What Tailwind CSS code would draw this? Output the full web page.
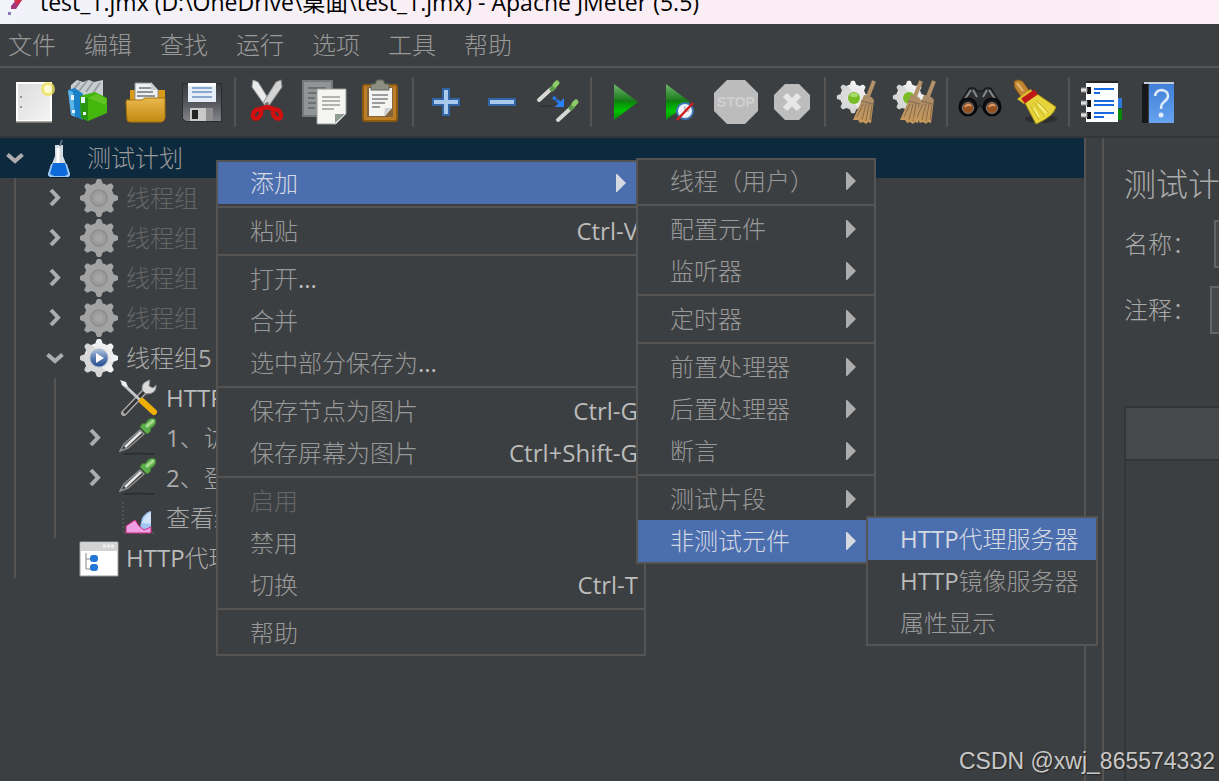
<!DOCTYPE html>
<html lang="zh-CN">
<head>
  <meta charset="UTF-8" />
  <meta name="viewport" content="width=device-width, initial-scale=1.0"/>
  <title>Apache JMeter (5.5)</title>
  <script src="https://cdn.jsdelivr.net/npm/@tailwindcss/browser@4"></script>
</head>
<body class="h-screen overflow-hidden flex flex-col bg-[#3c3f41] text-[#999999] text-2xl font-['Open_Sans','Noto_Sans_CJK_SC',sans-serif] font-light whitespace-nowrap">

  <!-- Shared icon shapes -->
  <svg width="0" height="0" class="absolute">
    <defs>
      <linearGradient id="gPaper" x1="0" y1="0" x2="1" y2="1"><stop offset="0" stop-color="#dcdcdc"/><stop offset="1" stop-color="#f4f4f4"/></linearGradient>
      <linearGradient id="gFolder" x1="0" y1="0" x2="0" y2="1"><stop offset="0" stop-color="#e9b84e"/><stop offset="1" stop-color="#c28a10"/></linearGradient>
      <linearGradient id="gDisk" x1="0" y1="0" x2="0" y2="1"><stop offset="0" stop-color="#3a3b40"/><stop offset=".5" stop-color="#55565c"/><stop offset="1" stop-color="#85868c"/></linearGradient>
      <linearGradient id="gPlay" x1="0" y1="0" x2="0" y2="1"><stop offset="0" stop-color="#6fb56f"/><stop offset=".48" stop-color="#157a15"/><stop offset=".52" stop-color="#089008"/><stop offset=".75" stop-color="#00c400"/><stop offset="1" stop-color="#0a8a0a"/></linearGradient>
      <linearGradient id="gBlue" x1="0" y1="0" x2="0" y2="1"><stop offset="0" stop-color="#3f7fd6"/><stop offset="1" stop-color="#66a3f0"/></linearGradient>
      <linearGradient id="gGear" x1="0" y1="0" x2="0" y2="1"><stop offset="0" stop-color="#f4f4f4"/><stop offset="1" stop-color="#d2d2d2"/></linearGradient>
      <linearGradient id="gStraw" x1="0" y1="0" x2="0" y2="1"><stop offset="0" stop-color="#a98c6a"/><stop offset="1" stop-color="#c99a5c"/></linearGradient>
      <linearGradient id="gBall" x1="0" y1="0" x2="0" y2="1"><stop offset="0" stop-color="#b4c6dc"/><stop offset=".45" stop-color="#5f83b6"/><stop offset="1" stop-color="#24498c"/></linearGradient>
    </defs>
    <symbol id="gear" viewBox="0 0 40 40">
      <circle cx="20" cy="20" r="15"/>
      <path id="teeth" d="M18.500 1h3l1 1 2 6v24l-2 6-1 1h-3l-1-1-2-6V8l2-6z"/>
      <use href="#teeth" transform="rotate(45 20 20)"/>
      <use href="#teeth" transform="rotate(90 20 20)"/>
      <use href="#teeth" transform="rotate(135 20 20)"/>
    </symbol>
    <symbol id="group-off" viewBox="0 0 40 40">
      <use href="#gear" fill="#a3a3a3"/>
      <circle cx="20" cy="20" r="8" fill="#9c9c9c" stroke="#8f8f8f" stroke-width="2"/>
      <circle cx="20" cy="20" r="4" fill="#a6a6a6"/>
    </symbol>
    <symbol id="dropper" viewBox="0 0 40 40">
      <path d="M5 36q15-1 30 0" stroke="#2a2c2d" stroke-width="1.500" fill="none"/>
      <path d="M1 33l4-7L21 12l4 4L9 30z" fill="#3a3a3a" stroke="#8d8d8d" stroke-width="1.500"/>
      <path d="M6 29L22 14" stroke="#e8e8e8" stroke-width="2.500"/>
      <path d="M21 9l7 7 3-2 1-4 3-2q3-4 1-7-4-2-7 1l-2 3-4 1z" fill="#5fae4e" stroke="#3d7e35"/>
      <path d="M28 8l6-5" stroke="#a5da8c" stroke-width="3" stroke-linecap="round"/>
    </symbol>
    <symbol id="whisk" viewBox="0 0 24 48">
      <path d="M21 3l-7 18" stroke="#b3916a" stroke-width="4"/>
      <path d="M11 17q7 0 10 5l-3 23-3-1-2 2-3-2-3 1-2-3-5 0z" fill="url(#gStraw)"/>
      <path d="M10 26L4 39M13 26l-4 16M16 26l-3 17M19 27l-2 15" stroke="#8a6a45" stroke-width="1"/>
      <path d="M8 23l12 3" stroke="#8d7355" stroke-width="1.500"/>
    </symbol>
    <symbol id="arrow" viewBox="0 0 10 18"><path d="M0 0h1l9 9-9 9H0z" fill="currentColor"/></symbol>
    <symbol id="open" viewBox="0 0 20 20"><path d="M2.500 6.500L10 13l7.500-6.500" fill="none" stroke="#adadad" stroke-width="4"/></symbol>
    <symbol id="closed" viewBox="0 0 20 20"><path d="M6 2l7 7.500L6 17" fill="none" stroke="#adadad" stroke-width="4"/></symbol>
  </svg>

  <!-- Title bar -->
  <header class="h-6 shrink-0 flex items-end gap-4 pl-2 overflow-hidden bg-gradient-to-r from-[#f1f2fa] via-[#faeef4] via-40% to-[#fbeef4] text-black">
    <svg width="16" height="24" viewBox="0 0 16 24"><path d="M3 6L8 0h6L8 9H3z" fill="#a5367c"/><path d="M6 0h8L9 5z" fill="#d22c4a"/><rect y="12" width="3" height="3" fill="#8878bc"/></svg>
    <p class="text-[23px] leading-[44px] font-normal">test_1.jmx (D:\OneDrive\桌面\test_1.jmx) - Apache JMeter (5.5)</p>
  </header>

  <!-- Menu bar -->
  <nav class="h-11 shrink-0 flex items-center gap-7 pl-2 border-b-2 border-[#565453]">
    <button>文件</button>
    <button>编辑</button>
    <button>查找</button>
    <button>运行</button>
    <button>选项</button>
    <button>工具</button>
    <button>帮助</button>
  </nav>

  <!-- Toolbar -->
  <div class="h-[70px] shrink-0 flex items-center pl-[6px] border-b-2 border-[#333638]">
    <button class="w-14 flex justify-center" aria-label="新建">
      <svg width="48" height="48" viewBox="0 0 48 48"><rect x="7" y="5" width="34" height="38" fill="url(#gPaper)" stroke="#fff" stroke-width="2"/><path d="M6 44h36" stroke="#8c8c80" stroke-width="1.500"/><path d="M10 19h2M10 29h2" stroke="#999" stroke-width="2"/><circle cx="38" cy="11" r="7" fill="#f0e45a" opacity=".8"/><circle cx="38" cy="11" r="4" fill="#fffbd0"/></svg>
    </button>
    <button class="w-14 flex justify-center" aria-label="模板">
      <svg width="48" height="48" viewBox="0 0 48 48"><path d="M5 7l6-5 6 2 6-2 5 2 9-2v18H4z" fill="#c7cdd0"/><path d="M7 12l7-8M13 13l8-10M20 14l7-10M27 15l7-10" stroke="#9aa1a5" stroke-width="2"/><path d="M2 12l7-2 8 6v26L5 37z" fill="#1a80c8"/><path d="M2 12l5 2 2 25-4-2z" fill="#5cb3e8"/><path d="M14 18l15-4 12 6v15L22 43l-7-3z" fill="#43b70c"/><path d="M14 18l8 2v23l-7-3z" fill="#2a9610"/><path d="M22 20l9-4 9 5v6z" fill="#62c424"/><path d="M15 19h4v6h-4M5 17h3v5H5M6 32h3v3H6M17 34h3v3h-3" fill="#e3f5ff"/></svg>
    </button>
    <button class="w-14 flex justify-center" aria-label="打开">
      <svg width="48" height="48" viewBox="0 0 48 48"><path d="M8 12h35v28H8z" fill="#d99a1c"/><path d="M13 5h16l7 7v14H13z" fill="#f0f0f0" stroke="#8d9191"/><path d="M17 10h13M15 14h16M15 18h18" stroke="#8d9598" stroke-width="2"/><path d="M29 4l7 8h-7z" fill="#c7cccc"/><path d="M4 24q0-3 3-2h13l3-2h20v20q-1 4-4 4H8q-3 0-3-3z" fill="url(#gFolder)" stroke="#a87508"/></svg>
    </button>
    <button class="w-14 flex justify-center" aria-label="保存">
      <svg width="48" height="48" viewBox="0 0 48 48"><path d="M4.500 5.500h39v38H8l-3.500-3z" fill="url(#gDisk)" stroke="#2b2c30"/><path d="M10 5h28v19H10z" fill="#e5eef7"/><path d="M10 5h28v3H10z" fill="#fff"/><path d="M14 10h20M14 14h20M14 19h20" stroke="#8aa9cc" stroke-width="2"/><path d="M12 30h23v13H12z" fill="#c9c9c9"/><path d="M28 30h7v13h-7z" fill="#8f8f8f"/><path d="M14 32h6v9h-6z" fill="#222"/></svg>
    </button>
    <span class="w-[2px] h-[50px] mx-1 bg-[#565453]"></span>
    <button class="w-14 flex justify-center" aria-label="剪切">
      <svg width="48" height="48" viewBox="0 0 48 48"><path d="M9 2l5 2 13 21-5 4L8 9z" fill="#eaeaea" stroke="#999"/><path d="M37 2l-5 2-13 21 5 4L38 9z" fill="#d3d3d3" stroke="#909090"/><circle cx="23" cy="26" r="2" fill="#777"/><g fill="none" stroke="#d01010" stroke-width="4.500"><ellipse cx="13" cy="36" rx="3.500" ry="5" transform="rotate(35 13 36)"/><ellipse cx="33" cy="36" rx="3.500" ry="5" transform="rotate(-35 33 36)"/><path d="M16 31l7-2 7 2"/></g></svg>
    </button>
    <button class="w-14 flex justify-center" aria-label="复制">
      <svg width="48" height="48" viewBox="0 0 48 48"><path d="M3 3h29v35H3z" fill="#929595" stroke="#757878" stroke-width="2"/><path d="M8 10h18M8 15h9M8 20h7M8 25h8M8 30h7" stroke="#6c7070" stroke-width="2"/><path d="M17 11h29v25l-10 10H17z" fill="#f5f5f4" stroke="#9a9c98"/><path d="M22 19h18M22 23h18M22 27h18M22 31h12" stroke="#9c9f9b" stroke-width="1.500"/><path d="M35 45v-9h10z" fill="#8e9d90"/></svg>
    </button>
    <button class="w-14 flex justify-center" aria-label="粘贴">
      <svg width="48" height="48" viewBox="0 0 48 48"><rect x="7" y="7" width="34" height="36" rx="2" fill="#bd7f26" stroke="#8c5a10" stroke-width="2"/><path d="M11 9h26v30H11z" fill="#81643c"/><path d="M13 10h23v20l-7 8H13z" fill="#f4f4f2"/><path d="M16 17h16M16 21h16M16 25h13M16 29h8" stroke="#9d9d9d" stroke-width="2"/><path d="M28 38l1-8h7z" fill="#cfcfcf"/><path d="M15 12V6h4l2-4h6l2 4h4v6z" fill="#8d9080" stroke="#606358"/></svg>
    </button>
    <span class="w-[2px] h-[50px] mx-1 bg-[#565453]"></span>
    <button class="w-14 flex justify-center" aria-label="展开">
      <svg width="48" height="48" viewBox="0 0 48 48"><path d="M21 11h6v10h10v6H27v10h-6V27H11v-6h10z" fill="#a9c9ec" stroke="#3165a8" stroke-width="2"/></svg>
    </button>
    <button class="w-14 flex justify-center" aria-label="折叠">
      <svg width="48" height="48" viewBox="0 0 48 48"><path d="M11 21h26v6H11z" fill="#a9c9ec" stroke="#3165a8" stroke-width="2"/></svg>
    </button>
    <button class="w-14 flex justify-center" aria-label="切换">
      <svg width="48" height="48" viewBox="0 0 48 48"><g stroke-linecap="round"><path d="M5 22L17 11M24 42L36 31" stroke="#d9d9d4" stroke-width="4"/><path d="M18 11l2-2M37 30l2-2" stroke="#5d9a50" stroke-width="5"/><path d="M21 7l2-2M40 26l2-2" stroke="#8bcb68" stroke-width="5"/></g><path d="M5 28h14" stroke="#292c2e"/><path d="M19 19l7 6" stroke="#2677e8" stroke-width="3" stroke-dasharray="4 1"/><path d="M30 20v9h-9z" fill="#2b82fb"/></svg>
    </button>
    <span class="w-[2px] h-[50px] mx-1 bg-[#565453]"></span>
    <button class="w-14 flex justify-center" aria-label="启动">
      <svg width="48" height="48" viewBox="0 0 48 48"><path d="M14 6l24 18-24 18z" fill="url(#gPlay)"/></svg>
    </button>
    <button class="w-14 flex justify-center" aria-label="不停顿开始">
      <svg width="48" height="48" viewBox="0 0 48 48"><path d="M10 6l24 18-24 18z" fill="url(#gPlay)"/><circle cx="29" cy="33" r="8" fill="#eef4fa" stroke="#3e78ba" stroke-width="2"/><path d="M29 33v-5M29 33h4" stroke="#999"/><path d="M21 42l16-17" stroke="#d31d1d" stroke-width="2.500"/></svg>
    </button>
    <button class="w-14 flex justify-center" aria-label="停止">
      <svg width="48" height="48" viewBox="0 0 48 48"><path d="M15 2h18l13 13v18L33 46H15L2 33V15z" fill="#bcbcbc"/><text x="24" y="29" text-anchor="middle" font-family="Liberation Sans Narrow, Liberation Sans" font-weight="bold" font-size="14" fill="#d0d0d0">STOP</text></svg>
    </button>
    <button class="w-14 flex justify-center" aria-label="关闭">
      <svg width="48" height="48" viewBox="0 0 48 48"><path d="M17 6h14l11 11v14L31 42H17L6 31V17z" fill="#bdbdbd"/><path d="M17 17l14 14M31 17L17 31" stroke="#e6e6e6" stroke-width="6"/></svg>
    </button>
    <span class="w-[2px] h-[50px] mx-1 bg-[#565453]"></span>
    <button class="w-14 flex justify-center" aria-label="清除">
      <svg width="48" height="48" viewBox="0 0 48 48"><use href="#gear" x="2" y="2" width="34" height="34" fill="url(#gGear)"/><circle cx="20" cy="20" r="6" fill="#79bc25"/><ellipse cx="20" cy="17" rx="4" ry="2" fill="#aadd70"/><use href="#whisk" x="19" y="0" width="24" height="48"/></svg>
    </button>
    <button class="w-14 flex justify-center" aria-label="清除全部">
      <svg width="48" height="48" viewBox="0 0 48 48"><use href="#gear" x="2" y="2" width="34" height="34" fill="url(#gGear)"/><circle cx="19" cy="20" r="6" fill="#79bc25"/><use href="#whisk" x="10" y="0" width="24" height="48"/><use href="#whisk" x="23" y="0" width="24" height="48"/></svg>
    </button>
    <span class="w-[2px] h-[50px] mx-1 bg-[#565453]"></span>
    <button class="w-14 flex justify-center" aria-label="查找">
      <svg width="48" height="48" viewBox="0 0 48 48"><path d="M4 24l6-9 3-5h6l2 3h6l2-3h6l3 5 6 9v8H28l-4-5-4 5H4z" fill="#2d2e30" stroke="#111"/><path d="M9 21l6-9M17 12l4 7M39 21l-6-9M31 12l-4 7" stroke="#85888b" stroke-width="2"/><circle cx="12" cy="29" r="8.500" fill="#191919" stroke="#080808" stroke-width="2"/><circle cx="36" cy="29" r="8.500" fill="#191919" stroke="#080808" stroke-width="2"/><circle cx="12" cy="30" r="5.500" fill="#94501f" stroke="#77797b"/><circle cx="36" cy="30" r="5.500" fill="#94501f" stroke="#77797b"/><path d="M9 29q3-4 6-1M33 29q3-4 6-1" stroke="#dca06c" stroke-width="2" fill="none"/></svg>
    </button>
    <button class="w-14 flex justify-center" aria-label="重置查找">
      <svg width="48" height="48" viewBox="0 0 48 48"><ellipse cx="29" cy="41" rx="16" ry="4" fill="#2b2d2f"/><path d="M2 4q4-4 9 0l7 10-8 6L3 10z" fill="#c28732" stroke="#8f5a14"/><path d="M5 5l6 8" stroke="#e6bb78" stroke-width="2"/><path d="M5 21l14-10 3 7-10 8z" fill="#d9c02a"/><path d="M13 25l12-9 19 13q-3 10-20 17z" fill="#e7d43c" stroke="#a8930f"/><path d="M18 27l9 15M21 24l12 15M24 22l13 13" stroke="#c9b62a"/><path d="M22 30l5 9M26 26l8 9" stroke="#fbf28a" stroke-width="1.500"/><path d="M11 23l13-9" stroke="#c01717" stroke-width="6"/></svg>
    </button>
    <span class="w-[2px] h-[50px] mx-1 bg-[#565453]"></span>
    <button class="w-14 flex justify-center" aria-label="函数助手">
      <svg width="48" height="48" viewBox="0 0 48 48"><path d="M38 20h6v10h-6z" fill="#2f78dd"/><path d="M38 31h6v11h-6z" fill="#078807"/><path d="M8 5h32v39H8z" fill="#fff"/><path d="M8 4h32" stroke="#24272a" stroke-width="2"/><path d="M9 9h4v7H9M9 22h4v7H9M9 34h4v7H9" fill="#111"/><path d="M3 10h6v4H3M3 23h6v4H3M3 35h6v4H3" fill="#dedede" stroke="#8a8a8a"/><path d="M16 11h20M16 15h6M16 23h20M16 27h20M16 35h20M16 39h10" stroke="#1769e0" stroke-width="2"/></svg>
    </button>
    <button class="w-14 flex justify-center" aria-label="帮助">
      <svg width="48" height="48" viewBox="0 0 48 48"><path d="M8 6l5-2h27v3H14v38H8z" fill="#16181a"/><path d="M10 4h30v2H10z" fill="#c3cdd8"/><path d="M15 6h25v39H15z" fill="url(#gBlue)"/><path d="M21 18q1-6 7-6 6 1 6 6 0 3-4 6-3 2-3 7" fill="none" stroke="#e1ecfa" stroke-width="2.500"/><circle cx="27" cy="37" r="2.500" fill="#e1ecfa"/></svg>
    </button>
  </div>

  <main class="flex-1 min-h-0 flex">
    <!-- Test plan tree -->
    <section class="flex-1 min-w-0 overflow-hidden border-r-2 border-[#565453]">
      <div class="h-10 flex items-center bg-[#0d293e] pl-[5px]">
        <svg width="20" height="20"><use href="#open"/></svg>
        <svg class="ml-[14px] mr-2" width="40" height="40" viewBox="0 0 40 40"><ellipse cx="20" cy="38" rx="12" ry="2" fill="#071b2a"/><path d="M16 7h8v11l7 18q0 3-3 3H13q-4 0-4-3l7-18z" fill="#d3dbe0"/><path d="M12 26h16l3 10q0 3-3 3H13q-4 0-4-3z" fill="#9cc7f5"/><path d="M14 25h12l3 11-3 2H15l-4-2z" fill="#0b6ad8"/><path d="M19 10v15" stroke="#fff" stroke-width="3"/><path d="M21 8l2-6" stroke="#5f6d78" stroke-width="2"/></svg>测试计划
      </div>
      <div class="ml-[14px] border-l-2 border-[#565453] text-[#666666]">
        <div class="h-10 flex items-center pl-[29px]">
          <svg width="20" height="20"><use href="#closed"/></svg>
          <svg class="ml-[14px] mr-[7px]" width="40" height="40"><use href="#group-off"/></svg>线程组
        </div>
        <div class="h-10 flex items-center pl-[29px]">
          <svg width="20" height="20"><use href="#closed"/></svg>
          <svg class="ml-[14px] mr-[7px]" width="40" height="40"><use href="#group-off"/></svg>线程组
        </div>
        <div class="h-10 flex items-center pl-[29px]">
          <svg width="20" height="20"><use href="#closed"/></svg>
          <svg class="ml-[14px] mr-[7px]" width="40" height="40"><use href="#group-off"/></svg>线程组
        </div>
        <div class="h-10 flex items-center pl-[29px]">
          <svg width="20" height="20"><use href="#closed"/></svg>
          <svg class="ml-[14px] mr-[7px]" width="40" height="40"><use href="#group-off"/></svg>线程组
        </div>
        <div class="h-10 flex items-center pl-[29px] text-[#aaaaaa]">
          <svg width="20" height="20"><use href="#open"/></svg>
          <svg class="ml-[14px] mr-[7px]" width="40" height="40" viewBox="0 0 40 40"><use href="#gear" fill="url(#gGear)"/><circle cx="20" cy="20" r="9" fill="url(#gBall)" stroke="#9fb3cf"/><path d="M17 15l8 5-8 5z" fill="#fff"/></svg>线程组<span class="font-normal">5</span>
        </div>
        <div class="ml-[38px] border-l-2 border-[#565453] text-[#aaaaaa]">
          <div class="h-10 flex items-center pl-[63px]">
            <svg class="mr-[7px]" width="40" height="40" viewBox="0 0 40 40"><path d="M5 35L26 13" stroke="#a7a7a7" stroke-width="6" stroke-linecap="round"/><path d="M5 35L26 13" stroke="#333" stroke-width="3"/><path d="M23 12q-1-8 8-10l-1 6 4 2 3-3q1 9-10 9z" fill="#dadada" stroke="#888"/><path d="M3 5l18 17" stroke="#c8c8c8" stroke-width="3"/><path d="M1 2l6 2 2 5-5-1z" fill="#eee"/><path d="M23 23l12 11" stroke="#efb004" stroke-width="6" stroke-linecap="round"/></svg><span class="font-normal text-[#bbbbbb]">HTTP</span>请求默认值
          </div>
          <div class="h-10 flex items-center pl-[29px]">
            <svg width="20" height="20"><use href="#closed"/></svg>
            <svg class="ml-[14px] mr-[7px]" width="40" height="40"><use href="#dropper"/></svg><span class="font-normal">1</span>、访问首页
          </div>
          <div class="h-10 flex items-center pl-[29px]">
            <svg width="20" height="20"><use href="#closed"/></svg>
            <svg class="ml-[14px] mr-[7px]" width="40" height="40"><use href="#dropper"/></svg><span class="font-normal">2</span>、登录
          </div>
          <div class="h-10 flex items-center pl-[63px]">
            <svg class="mr-[7px]" width="40" height="40" viewBox="0 0 40 40"><path d="M4 4v31h32" fill="none" stroke="#666" stroke-dasharray="2 2"/><path d="M20 34l3-14q5-7 9-7v21z" fill="#9ec5f2"/><path d="M23 25q3-9 9-11v12z" fill="#cfe3fb"/><path d="M7 35V28l9-6 4 6 5 4 7-3v6z" fill="#ef9fe4" stroke="#cf2a80"/></svg>查看结果树
          </div>
        </div>
        <div class="h-10 flex items-center pl-[63px] text-[#aaaaaa]">
          <svg class="mr-[7px]" width="40" height="40" viewBox="0 0 40 40"><path d="M1 4h38v34H1z" fill="#fff" stroke="#9a9a9a"/><path d="M2 4h36v9H2z" fill="#d3d3d3"/><path d="M24 8h12" stroke="#efefef" stroke-width="3" stroke-dasharray="3 1"/><path d="M7 15v16h5M7 21h5" fill="none" stroke="#888"/><rect x="11" y="17" width="8" height="7" rx="3" fill="#2477d6"/><rect x="11" y="26" width="8" height="7" rx="3" fill="#2477d6"/></svg><span class="font-normal text-[#bbbbbb]">HTTP</span>代理服务器
        </div>
      </div>
    </section>

    <!-- Split handle -->
    <div class="w-[18px] shrink-0 border-r-2 border-[#565453]"></div>

    <!-- Editor panel -->
    <section class="w-[115px] shrink-0 overflow-hidden flex flex-col pl-5 text-[#aaaaaa]">
      <h1 class="mt-[26px] text-[32px] leading-10">测试计划</h1>
      <div class="mt-4 flex items-center gap-[18px]">
        <label for="name" class="shrink-0 w-[72px]">名称：</label>
        <input id="name" type="text" value="测试计划" class="w-96 h-12 shrink-0 px-2 bg-[#45494a] border-2 border-[#646464]">
      </div>
      <div class="mt-[18px] flex items-center gap-[14px]">
        <label for="comment" class="shrink-0 w-[72px]">注释：</label>
        <input id="comment" type="text" class="w-96 h-12 shrink-0 px-2 bg-[#45494a] border-2 border-[#646464]">
      </div>
      <div class="mt-[72px] flex-1 w-[600px] border-2 border-b-0 border-[#333638]">
        <table class="w-full">
          <thead><tr><th class="h-[52px] bg-[#45494a] border-b-2 border-[#333638]" aria-label="名称"></th></tr></thead>
        </table>
      </div>
    </section>
  </main>

  <!-- Context menu -->
  <div class="absolute left-[216px] top-[160px] w-[430px] flex flex-col bg-[#3c3f41] border-2 border-[#565453]">
    <button class="h-[42px] flex items-center justify-between pl-8 pr-[18px] bg-[#4b6eaf] text-[#d5d9e2]">添加<svg width="10" height="18"><use href="#arrow"/></svg></button>
    <hr class="my-[2px] border-t-2 border-[#565453]">
    <button class="h-[42px] flex items-center justify-between pl-8 pr-[6px]">粘贴<kbd class="font-[Open_Sans] font-normal text-[#bbbbbb]">Ctrl-V</kbd></button>
    <hr class="my-[2px] border-t-2 border-[#565453]">
    <button class="h-[42px] flex items-center pl-8">打开<span class="font-normal text-[#bbbbbb]">...</span></button>
    <button class="h-[42px] flex items-center pl-8">合并</button>
    <button class="h-[42px] flex items-center pl-8">选中部分保存为<span class="font-normal text-[#bbbbbb]">...</span></button>
    <hr class="my-[2px] border-t-2 border-[#565453]">
    <button class="h-[42px] flex items-center justify-between pl-8 pr-[6px]">保存节点为图片<kbd class="font-[Open_Sans] font-normal text-[#bbbbbb]">Ctrl-G</kbd></button>
    <button class="h-[42px] flex items-center justify-between pl-8 pr-[6px]">保存屏幕为图片<kbd class="font-[Open_Sans] font-normal text-[#bbbbbb]">Ctrl+Shift-G</kbd></button>
    <hr class="my-[2px] border-t-2 border-[#565453]">
    <button class="h-[42px] flex items-center pl-8 text-[#666666]" disabled>启用</button>
    <button class="h-[42px] flex items-center pl-8">禁用</button>
    <button class="h-[42px] flex items-center justify-between pl-8 pr-[6px]">切换<kbd class="font-[Open_Sans] font-normal text-[#bbbbbb]">Ctrl-T</kbd></button>
    <hr class="my-[2px] border-t-2 border-[#565453]">
    <button class="h-[42px] flex items-center pl-8">帮助</button>
  </div>

  <!-- 添加 submenu -->
  <div class="absolute left-[636px] top-[158px] w-[240px] flex flex-col bg-[#3c3f41] border-2 border-[#565453]">
    <button class="h-[42px] flex items-center justify-between pl-8 pr-[18px]">线程（用户）<svg class="text-[#adadad]" width="10" height="18"><use href="#arrow"/></svg></button>
    <hr class="my-[2px] border-t-2 border-[#565453]">
    <button class="h-[42px] flex items-center justify-between pl-8 pr-[18px]">配置元件<svg class="text-[#adadad]" width="10" height="18"><use href="#arrow"/></svg></button>
    <button class="h-[42px] flex items-center justify-between pl-8 pr-[18px]">监听器<svg class="text-[#adadad]" width="10" height="18"><use href="#arrow"/></svg></button>
    <hr class="my-[2px] border-t-2 border-[#565453]">
    <button class="h-[42px] flex items-center justify-between pl-8 pr-[18px]">定时器<svg class="text-[#adadad]" width="10" height="18"><use href="#arrow"/></svg></button>
    <hr class="my-[2px] border-t-2 border-[#565453]">
    <button class="h-[42px] flex items-center justify-between pl-8 pr-[18px]">前置处理器<svg class="text-[#adadad]" width="10" height="18"><use href="#arrow"/></svg></button>
    <button class="h-[42px] flex items-center justify-between pl-8 pr-[18px]">后置处理器<svg class="text-[#adadad]" width="10" height="18"><use href="#arrow"/></svg></button>
    <button class="h-[42px] flex items-center justify-between pl-8 pr-[18px]">断言<svg class="text-[#adadad]" width="10" height="18"><use href="#arrow"/></svg></button>
    <hr class="my-[2px] border-t-2 border-[#565453]">
    <button class="h-[42px] flex items-center justify-between pl-8 pr-[18px]">测试片段<svg class="text-[#adadad]" width="10" height="18"><use href="#arrow"/></svg></button>
    <button class="h-[42px] flex items-center justify-between pl-8 pr-[18px] bg-[#4b6eaf] text-[#d5d9e2]">非测试元件<svg width="10" height="18"><use href="#arrow"/></svg></button>
  </div>

  <!-- 非测试元件 submenu -->
  <div class="absolute left-[866px] top-[516px] w-[232px] flex flex-col bg-[#3c3f41] border-2 border-[#565453]">
    <button class="h-[42px] flex items-center pl-8 bg-[#4b6eaf] text-[#d5d9e2]"><span class="font-normal">HTTP</span>代理服务器</button>
    <button class="h-[42px] flex items-center pl-8"><span class="font-normal text-[#bbbbbb]">HTTP</span>镜像服务器</button>
    <button class="h-[42px] flex items-center pl-8">属性显示</button>
  </div>

  <!-- Watermark -->
  <p class="absolute right-1 bottom-1 text-[23px] leading-8 font-normal font-['Liberation_Sans',sans-serif] text-[#c8c8c8] [text-shadow:1px_1px_1px_#222]">CSDN @xwj_865574332</p>
</body>
</html>
